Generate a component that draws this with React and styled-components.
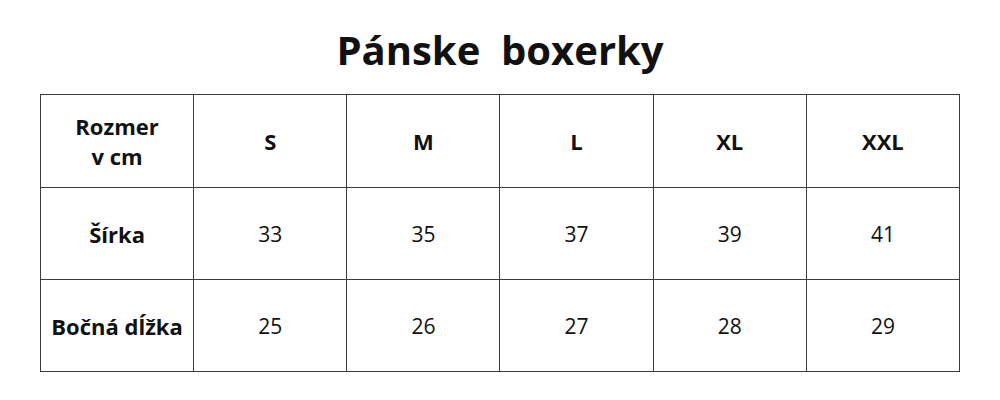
import React from "react";
import styled, { createGlobalStyle } from "styled-components";

const GlobalStyle = createGlobalStyle`
  body {
    margin: 0;
    background: #ffffff;
    font-family: "Open Sans", "Liberation Sans", sans-serif;
    color: #111111;
  }
`;

const Page = styled.div`
  width: 1000px;
  height: 400px;
  padding-top: 26px;
  box-sizing: border-box;
  display: flex;
  flex-direction: column;
  align-items: center;
`;

const Title = styled.h1`
  margin: 0 0 20px;
  font-size: 40px;
  font-weight: 700;
  line-height: 48px;
  white-space: pre;
  color: #111111;
`;

const Table = styled.table`
  width: 920px;
  border-collapse: collapse;
  table-layout: fixed;
`;

const Row = styled.tr`
  height: ${(p) => (p.$head ? "93px" : "92px")};
`;

const Cell = styled.td`
  padding: 0;
  border: 1px solid #3c3c3c;
  text-align: center;
  vertical-align: middle;
  font-size: ${(p) => (p.$bold ? "22px" : "21px")};
  line-height: 30px;
  font-weight: ${(p) => (p.$bold ? 700 : 400)};
  color: #111111;
`;

const sizes = ["S", "M", "L", "XL", "XXL"];
const rows = [
  { label: "Šírka", values: [33, 35, 37, 39, 41] },
  { label: "Bočná dĺžka", values: [25, 26, 27, 28, 29] },
];

export default function App() {
  return (
    <>
      <GlobalStyle />
      <Page>
        <Title>{"Pánske  boxerky"}</Title>
        <Table>
          <tbody>
            <Row $head>
              <Cell $bold>
                Rozmer
                <br />v cm
              </Cell>
              {sizes.map((s) => (
                <Cell key={s} $bold>
                  {s}
                </Cell>
              ))}
            </Row>
            {rows.map((row) => (
              <Row key={row.label}>
                <Cell $bold>{row.label}</Cell>
                {row.values.map((v) => (
                  <Cell key={v}>{v}</Cell>
                ))}
              </Row>
            ))}
          </tbody>
        </Table>
      </Page>
    </>
  );
}
